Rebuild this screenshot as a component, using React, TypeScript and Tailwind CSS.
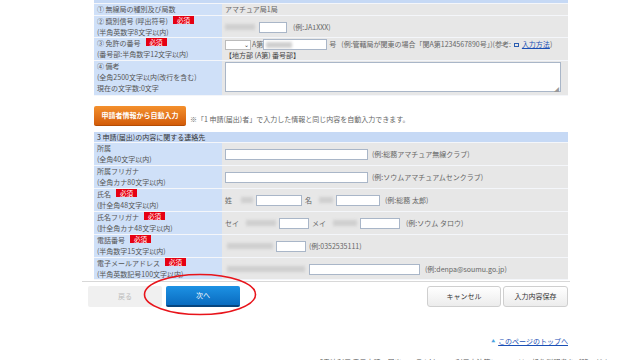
import React from "react";

const Badge = () => (
  <span className="inline-block bg-[#e60012] text-white text-[6.5px] leading-[8px] px-[4px] ml-[5px] align-[1px]">必須</span>
);

const Blur = ({ w }: { w: string }) => <span className={`inline-block h-[6px] bg-[#cfcfcf] blur-[1.5px] ${w}`} />;

const Box = ({ w }: { w: string }) => <span className={`inline-block h-[11px] bg-white border border-[#a9b6c8] ${w}`} />;

const Row = ({ label, children, h }: { label: React.ReactNode; children: React.ReactNode; h: string }) => (
  <div className={`flex border-b border-[#f4f6fa] ${h}`}>
    <div className="w-[128px] shrink-0 bg-[#cfe0f8] px-[3px] text-[7px] leading-[11px] text-[#555]">{label}</div>
    <div className="flex-1 bg-[#e7e7e7] px-[3px] text-[7px] leading-[11px] text-[#666]">{children}</div>
  </div>
);

const contacts = [
  { label: "所属", note: "(全角40文字以内)", ex: "(例:総務アマチュア無線クラブ)" },
  { label: "所属フリガナ", note: "(全角カナ80文字以内)", ex: "(例:ソウムアマチュアムセンクラブ)" },
];

export default function App() {
  return (
    <div className="relative w-[640px] h-[360px] overflow-hidden bg-white font-['Noto_Sans_CJK_JP',sans-serif]">
      <div className="ml-[88px] w-[480px]">
        {/* section 2 (top cut off) */}
        <div className="ml-[6px]">
          <div className="h-[4px] bg-[#c6d9f5] border-b border-[#f4f6fa]" />
          <Row h="h-[12px]" label="① 無線局の種別及び局数">
            アマチュア局1局
          </Row>
          <Row
            h="h-[22px]"
            label={
              <>
                <div>② 識別信号 (呼出符号)<Badge /></div>
                <div>(半角英数字8文字以内)</div>
              </>
            }
          >
            <div className="flex items-center h-[22px] gap-[4px]">
              <Blur w="w-[30px]" />
              <Box w="w-[28px]" />
              <span className="ml-[2px]">(例:JA1XXX)</span>
            </div>
          </Row>
          <Row
            h="h-[23px]"
            label={
              <>
                <div>③ 免許の番号<Badge /></div>
                <div>(番号部:半角数字12文字以内)</div>
              </>
            }
          >
            <div className="flex items-center h-[11px] mt-[1px]">
              <span className="inline-flex items-center justify-end w-[26px] h-[10px] bg-white border border-[#bbb] pr-[1px] text-[6px] text-[#333]">⌄</span>
              <span className="ml-[1px]">A第</span>
              <span className="flex items-center h-[11px] w-[64px] bg-white border border-[#a9b6c8] pl-[2px]">
                <Blur w="w-[26px]" />
              </span>
              <span className="ml-[2px]">号</span>
              <span className="ml-[5px] whitespace-nowrap">
                (例:管轄局が関東の場合「関A第1234567890号」)(参考:
                <span className="inline-block w-[5px] h-[4px] border border-[#2a5db0] mx-[3px]" />
                <span className="text-[#1a4fb5] underline">入力方法</span>)
              </span>
            </div>
            <div className="text-[#444]">【地方部 (A第) 番号部】</div>
          </Row>
          <Row
            h="h-[35px]"
            label={
              <>
                <div>④ 備考</div>
                <div>(全角2500文字以内(改行を含む)</div>
                <div>現在の文字数:0文字</div>
              </>
            }
          >
            <div className="relative mt-[1px] h-[30px] w-[336px] bg-white border border-[#a9b6c8]">
              <span className="absolute right-[1px] bottom-0 text-[5px] leading-[5px] text-[#999]">◢</span>
            </div>
          </Row>
        </div>

        {/* auto fill */}
        <div className="ml-[6px] mt-[10px] flex items-end gap-[4px]">
          <button className="w-[92px] h-[20px] rounded-[2px] bg-gradient-to-b from-[#f4902c] to-[#d35c08] border-b border-[#b44c05] text-white text-[7px] font-bold">
            申請者情報から自動入力
          </button>
          <span className="text-[7px] leading-[11px] text-[#666] mb-[1px]">
            ※「1 申請(届出)者」で入力した情報と同じ内容を自動入力できます。
          </span>
        </div>

        {/* section 3 */}
        <div className="ml-[6px] mt-[6px]">
          <div className="h-[11px] bg-[#c6d9f5] border-b border-[#f4f6fa] px-[3px] text-[7px] leading-[10px] text-[#333]">
            3 申請(届出)の内容に関する連絡先
          </div>
          {contacts.map((c) => (
            <Row
              key={c.label}
              h="h-[23px]"
              label={
                <>
                  <div>{c.label}</div>
                  <div>{c.note}</div>
                </>
              }
            >
              <div className="flex items-center h-[22px] gap-[4px]">
                <Box w="w-[143px]" />
                <span>{c.ex}</span>
              </div>
            </Row>
          ))}
          <Row
            h="h-[23px]"
            label={
              <>
                <div>氏名<Badge /></div>
                <div>(計全角48文字以内)</div>
              </>
            }
          >
            <div className="flex items-center h-[22px] gap-[3px]">
              <span>姓</span>
              <Blur w="w-[12px] ml-[6px]" />
              <Box w="w-[46px]" />
              <span>名</span>
              <Blur w="w-[14px] ml-[4px]" />
              <Box w="w-[44px]" />
              <span className="ml-[2px]">(例:総務 太郎)</span>
            </div>
          </Row>
          <Row
            h="h-[23px]"
            label={
              <>
                <div>氏名フリガナ<Badge /></div>
                <div>(計全角カナ48文字以内)</div>
              </>
            }
          >
            <div className="flex items-center h-[22px] gap-[3px]">
              <span>セイ</span>
              <Blur w="w-[30px] ml-[4px]" />
              <Box w="w-[30px]" />
              <span>メイ</span>
              <Blur w="w-[24px] ml-[4px]" />
              <Box w="w-[40px]" />
              <span className="ml-[3px]">(例:ソウム タロウ)</span>
            </div>
          </Row>
          <Row
            h="h-[23px]"
            label={
              <>
                <div>電話番号<Badge /></div>
                <div>(半角数字15文字以内)</div>
              </>
            }
          >
            <div className="flex items-center h-[22px] gap-[3px]">
              <Blur w="w-[46px] ml-[2px]" />
              <Box w="w-[30px]" />
              <span>(例:0352535111)</span>
            </div>
          </Row>
          <Row
            h="h-[22px]"
            label={
              <>
                <div>電子メールアドレス<Badge /></div>
                <div>(半角英数記号100文字以内)</div>
              </>
            }
          >
            <div className="flex items-center h-[22px] gap-[4px]">
              <Blur w="w-[78px] ml-[2px]" />
              <Box w="w-[111px]" />
              <span className="ml-[1px]">(例:denpa@soumu.go.jp)</span>
            </div>
          </Row>
        </div>

        <div className="-ml-[6px] w-[488px] mt-[1px] border-t border-[#d8d8d8]" />

        {/* buttons */}
        <div className="mt-[4px] flex items-center text-[7px]">
          <button className="w-[74px] h-[21px] bg-[#f0f0f0] text-[#bbb] rounded-[2px]">戻る</button>
          <button className="ml-[4px] w-[74px] h-[21px] bg-gradient-to-b from-[#1d92e4] to-[#0a6cc0] border-b-2 border-[#06457f] text-white rounded-[2px]">
            次へ
          </button>
          <div className="flex-1" />
          <button className="w-[74px] h-[21px] rounded-[3px] border border-[#cfcfcf] bg-gradient-to-b from-white to-[#ececec] text-[#333]">
            キャンセル
          </button>
          <button className="ml-[2px] w-[65px] h-[21px] rounded-[3px] border border-[#cfcfcf] bg-gradient-to-b from-white to-[#ececec] text-[#333]">
            入力内容保存
          </button>
        </div>

        <div className="mt-[29px] flex justify-end items-center gap-[3px] text-[7px] leading-[10px]">
          <span className="text-[4px] text-[#4aa3df]">▲</span>
          <span className="text-[#1a4fb5] underline">このページのトップへ</span>
        </div>

        <div className="mt-[11px] ml-[228px] whitespace-nowrap text-[7px] leading-[10px] text-[#555]">
          「電波利用 電子申請・届出システムLite」の利用方法等については、操作説明書をご覧ください。
        </div>
      </div>

      <svg className="absolute left-[143px] top-[273px]" width="114" height="43" viewBox="0 0 114 43">
        <ellipse cx="57" cy="21.5" rx="55.5" ry="20" fill="none" stroke="#e8141b" strokeWidth="1.6" />
      </svg>
    </div>
  );
}
